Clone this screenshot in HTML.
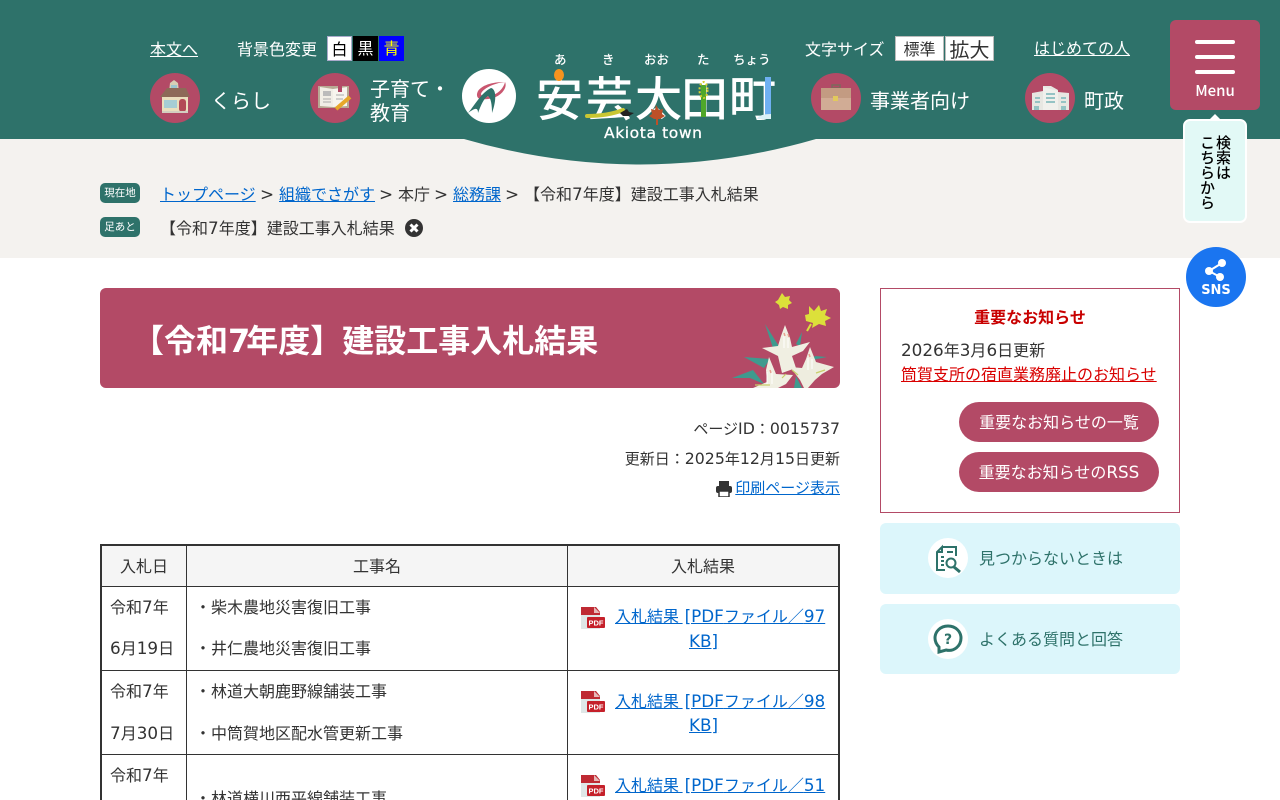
<!DOCTYPE html>
<html lang="ja"><head><meta charset="utf-8"><title>【令和7年度】建設工事入札結果</title>
<style>
*{box-sizing:border-box}
html,body{margin:0;padding:0;width:1280px;height:800px;overflow:hidden;background:#fff}
body{font:16px/24px "Noto Sans CJK JP",sans-serif;color:#333}
#p{position:absolute;left:0;top:0;width:1280px;height:800px;overflow:hidden}
.a{position:absolute;white-space:nowrap;line-height:24px;margin-top:-1px}
.b{position:absolute}
i{font-style:normal;font-family:"DejaVu Sans",sans-serif;font-size:1.05em}
a{color:#0066cc;text-decoration:underline}
.w{color:#fff}.w a{color:#fff}
.c{position:absolute;width:50px;height:50px;border-radius:50%;background:#b34a66;top:73px}
.n{font-size:20px;color:#fff}
.s15{font-size:15px}
.sw{position:absolute;top:36px;height:25px;text-align:center;line-height:23px}
.tag{position:absolute;left:100px;width:40px;height:20px;background:#2e726a;border-radius:5px;color:#fff;font-size:10.5px;line-height:20px;text-align:center}
.btn{position:absolute;left:959px;width:200px;height:40px;border-radius:20px;background:#b34a66;color:#fff;text-align:center;line-height:38px}
.help{position:absolute;left:880px;width:300px;background:#dcf6fb;border-radius:6px}
.hc{position:absolute;left:928px;width:40px;height:40px;border-radius:50%;background:#fff}
.k{font-size:47px;line-height:48px;font-weight:500;color:#fff}
.r{font-size:12.500px;font-weight:500;color:#fff}
</style></head><body><div id="p">

<div class="b" style="left:0;top:0;width:1280px;height:139px;background:#2e726a"></div>
<div class="b" style="left:0;top:139px;width:1280px;height:119px;background:#f4f2ef"></div>
<svg class="b" style="left:460px;top:138px" width="360" height="28"><path d="M4 1Q180 52 356 1Z" fill="#2e726a"/></svg>

<div class="a w" style="left:150px;top:37px"><a href="#">本文へ</a></div>
<div class="a w" style="left:237px;top:37px">背景色変更</div>
<div class="sw" style="left:327px;width:25px;background:#fff;border:1px solid #aac;color:#000">白</div>
<div class="sw" style="left:353px;width:25px;background:#000;color:#fff">黒</div>
<div class="sw" style="left:379px;width:25px;background:#00f;color:#ff0">青</div>

<div class="a w" style="left:805px;top:37px">文字サイズ</div>
<div class="sw" style="left:895px;width:49px;background:#fff;border:1px solid #bbb;color:#333">標準</div>
<div class="sw" style="left:945px;width:49px;background:#fff;border:1px solid #bbb;color:#333;font-size:20px">拡大</div>
<div class="a w" style="left:1034px;top:36px"><a href="#">はじめての人</a></div>

<div class="c" style="left:150px"><svg width="50" height="50"><path d="M20 10L24 7L28 10L29 19H19Z" fill="#d8cfb5"/><rect x="21" y="12" width="6" height="4" fill="#9cc6cf"/><path d="M10 24L17 15H36L40 24Z" fill="#8d6a58"/><rect x="12" y="24" width="26" height="16" fill="#eadfbd"/><rect x="14" y="27" width="13" height="8" fill="#a6cdd4"/><rect x="29" y="26" width="7" height="13" rx="3" fill="#b34a56"/><rect x="12" y="38" width="26" height="2" fill="#d3cfc0"/></svg></div>
<div class="a n" style="left:211px;top:89px">くらし</div>
<div class="c" style="left:310px"><svg width="50" height="50"><rect x="8" y="13" width="31" height="22" fill="#b8a994"/><path d="M10 14L23 16V34L10 33Z" fill="#f1eee6"/><path d="M23 16L37 14V33L23 34Z" fill="#f7f5ee"/><rect x="13" y="18" width="8" height="5" fill="#bbb"/><path d="M13 26h8M13 29h8M26 22h8M26 26h7" stroke="#aaa" stroke-width="1"/><rect x="28" y="13" width="4" height="6" fill="#b34a66"/><path d="M26 36L40 24" stroke="#e7a72a" stroke-width="4"/></svg></div>
<div class="a n" style="left:370px;top:77px">子育て・</div>
<div class="a n" style="left:370px;top:101px">教育</div>
<div class="c" style="left:811px"><svg width="50" height="50"><rect x="21" y="12" width="8" height="3" fill="none" stroke="#7d6a5c" stroke-width="1.500"/><rect x="10" y="15" width="30" height="10" fill="#c39b82"/><rect x="10" y="25" width="30" height="12" fill="#d1ac95"/><rect x="22" y="23" width="5" height="5" fill="#e2c95c"/></svg></div>
<div class="a n" style="left:870px;top:89px">事業者向け</div>
<div class="c" style="left:1025px"><svg width="50" height="50"><path d="M7 20L18 18V13L26 13L33 17V19L44 20V37H7Z" fill="#e7e7e2"/><path d="M18 14L33 18V37H18Z" fill="#f0f0ec"/><path d="M21 21h9M21 25h9M21 29h9M10 25h5M10 29h5M36 25h5M36 29h5" stroke="#94c3c4" stroke-width="2"/><rect x="9" y="33" width="5" height="4" fill="#94c3c4"/><rect x="36" y="33" width="5" height="4" fill="#94c3c4"/></svg></div>
<div class="a n" style="left:1084px;top:89px">町政</div>

<div class="b" style="left:462px;top:69px;width:54px;height:54px;border-radius:50%;background:#fff"></div>
<svg class="b" style="left:462px;top:69px" width="54" height="54" fill="none"><path d="M43 13C33 13 21 15 16 22C14 26 15 29 18 30C27 31 37 29 42 21C44 18 44 15 43 13C42 18 37 25 28 27C23 28 19 27 19 25C20 20 32 14 43 13Z" fill="#c9566f"/><path d="M6 44C13 36 19 24 29 19C34 20 35 30 30 44C30 36 29 29 26 27C22 29 19 36 16 44C16 39 14 38 6 44Z" fill="#2e726a"/></svg>

<div class="a r" style="left:554px;top:48px">あ</div>
<div class="a r" style="left:602px;top:48px">き</div>
<div class="a r" style="left:644px;top:48px">おお</div>
<div class="a r" style="left:697px;top:48px">た</div>
<div class="a r" style="left:733px;top:48px">ちょう</div>
<div class="a k" style="left:536px;top:73px">安</div>
<div class="a k" style="left:586px;top:73px">芸</div>
<div class="a k" style="left:635px;top:73px">太</div>
<div class="a k" style="left:681px;top:73px">田</div>
<div class="a k" style="left:729px;top:73px">町</div>
<svg class="b" style="left:530px;top:65px" width="250" height="65"><ellipse cx="29" cy="10" rx="5" ry="6" fill="#f7931e"/><path d="M57 51Q78 51 93 45" stroke="#c9c632" stroke-width="4" fill="none" stroke-linecap="round"/><path d="M90 48l7-4 2 3 5 1-5 3-6 0z" fill="#222"/><path d="M126 40l3 5 4-1-1 5 3 2-5 3-2 0 0 6h-2v-6h-2l-5-3 3-2-1-5 4 1z" fill="#bd5028"/><rect x="171" y="20" width="5" height="32" fill="#4fa82a"/><ellipse cx="173.500" cy="25" rx="4" ry="8" fill="none" stroke="#d8d030" stroke-width="2" stroke-dasharray="2 2"/><rect x="235" y="12" width="6" height="40" fill="#6fb0f2"/><path d="M227 54Q229 49 241 49V54Z" fill="#d9f1f7"/></svg>
<div class="a w" style="left:604px;top:122px;font-family:'DejaVu Sans',sans-serif;font-size:15.500px;letter-spacing:.6px;-webkit-text-stroke:.3px #fff">Akiota town</div>

<div class="b" style="left:1170px;top:20px;width:90px;height:90px;background:#b34a66;border-radius:6px"></div>
<div class="b" style="left:1195px;top:40px;width:40px;height:4px;border-radius:2px;background:#fff"></div>
<div class="b" style="left:1195px;top:55px;width:40px;height:4px;border-radius:2px;background:#fff"></div>
<div class="b" style="left:1195px;top:70px;width:40px;height:4px;border-radius:2px;background:#fff"></div>
<div class="a w" style="left:1170px;width:90px;top:80px;text-align:center;font-size:15px;font-weight:500">Menu</div>

<svg class="b" style="left:1183px;top:112px" width="64" height="112"><path d="M25 9L32 2L39 9Z" fill="#fff"/><rect x="1" y="8" width="62" height="102" rx="6" fill="#e2f9f6" stroke="#fff" stroke-width="2"/></svg>
<div class="b" style="left:1199px;top:135px;width:32px;color:#000;font-size:15px;line-height:16px;writing-mode:vertical-rl;height:80px;font-weight:500">検索は<br>こちらから</div>

<div class="b" style="left:1186px;top:247px;width:60px;height:60px;border-radius:50%;background:#1a75f0"></div>
<svg class="b" style="left:1186px;top:247px" width="60" height="60"><path d="M36 16L23 24L34 30" stroke="#fff" stroke-width="2" fill="none"/><circle cx="36" cy="16" r="4" fill="#fff"/><circle cx="23" cy="24" r="4" fill="#fff"/><circle cx="34" cy="30" r="4" fill="#fff"/></svg>
<div class="a w" style="left:1186px;width:60px;top:280px;text-align:center;font-family:'DejaVu Sans',sans-serif;font-size:13px;font-weight:700">SNS</div>

<div class="tag" style="top:183px">現在地</div>
<div class="tag" style="top:217px">足あと</div>
<div class="a" style="left:160px;top:182px"><a href="#">トップページ</a></div>
<div class="a" style="left:260px;top:182px"><i>&gt;</i></div>
<div class="a" style="left:279px;top:182px"><a href="#">組織でさがす</a></div>
<div class="a" style="left:379px;top:182px"><i>&gt;</i></div>
<div class="a" style="left:398px;top:182px">本庁</div>
<div class="a" style="left:434px;top:182px"><i>&gt;</i></div>
<div class="a" style="left:453px;top:182px"><a href="#">総務課</a></div>
<div class="a" style="left:505px;top:182px"><i>&gt;</i></div>
<div class="a" style="left:524px;top:182px">【令和<i>7</i>年度】建設工事入札結果</div>
<div class="a" style="left:160px;top:216px">【令和<i>7</i>年度】建設工事入札結果</div>
<svg class="b" style="left:405px;top:219px" width="18" height="18"><circle cx="9" cy="9" r="9" fill="#333"/><path d="M5.500 5.500L12.500 12.500M12.500 5.500L5.500 12.500" stroke="#fff" stroke-width="3"/></svg>

<div class="b" style="left:100px;top:288px;width:740px;height:100px;background:#b34a66;border-radius:6px;overflow:hidden">
<svg class="b" style="left:620px;top:0" width="120" height="100">
<path d="M45 36L60 60L53 60Z" fill="#3f9a8e"/><path d="M82 44L80 58L76 56Z" fill="#3f9a8e"/><path d="M24 69L50 71L44 80Z" fill="#3f9a8e"/><path d="M12 90L33 82L44 96L30 90Z" fill="#3f9a8e"/><path d="M107 69L92 72L95 68Z" fill="#3f9a8e"/><path d="M76 88L82 100H74Z" fill="#3f9a8e"/>
<path d="M62 5L65 9L70 8L69 12L72 15L68 17L68 21L63 19L60 21L59 17L55 14L58 12Z" fill="#dce03a"/>
<path d="M89 18L94 23L99 17L101 23L107 21L105 27L111 30L105 33L106 38L99 36L92 40L93 35L86 33L85 27L89 26Z" fill="#dce03a"/><path d="M91 36L87 43" stroke="#dce03a" stroke-width="2"/>
<path d="M65 37L70 50L72 59L90 54L83 63L72 68L76 80L62 85L58 68L42 60L58 58L61 48Z" fill="#f0efe2"/>
<path d="M90 59L96 74L114 79L102 86L95 92L88 100H84L80 92L70 79L82 80L86 71Z" fill="#eeeddf"/>
<path d="M49 69L56 86L73 87L66 96L58 100H33L47 94L46 82Z" fill="#f0efe2"/>
<path d="M64 48v12M68 50v10M88 70v12M92 71v10M47 84v12M52 84v12" stroke="#fff"/><path d="M72 82L78 87M96 85L105 82M35 97H50M62 90L66 86" stroke="#c8cf6a" stroke-width="1.200"/><path d="M64 45l1 3M68 46l1 3M50 82l1 3M89 66l1 3" stroke="#e8a090" stroke-width="1.500"/></svg>
</div>
<div class="a" style="left:132px;top:322px;font-size:32px;line-height:36px;font-weight:700;color:#fff">【令和<span style="font-family:'DejaVu Sans',sans-serif;font-size:32px;letter-spacing:-4px">7</span>年度】建設工事入札結果</div>

<div class="a s15" style="right:440px;top:418px">ページ<i>ID</i>：<i>0015737</i></div>
<div class="a s15" style="right:440px;top:448px">更新日：<i>2025</i>年<i>12</i>月<i>15</i>日更新</div>
<svg class="b" style="left:716px;top:481px" width="16" height="16"><rect x="3" y="0" width="10" height="5" fill="#333"/><rect x="0" y="5" width="16" height="7" rx="2" fill="#333"/><rect x="3" y="10" width="10" height="6" fill="#fff" stroke="#333" stroke-width="1.500"/></svg>
<div class="a s15" style="right:440px;top:477px"><a href="#">印刷ページ表示</a></div>

<div class="b" style="left:100px;top:544px;width:740px;height:256px;border:2px solid #333;border-bottom:0"></div>
<div class="b" style="left:102px;top:546px;width:736px;height:40px;background:#f5f5f5"></div>
<div class="b" style="left:186px;top:546px;width:1px;height:254px;background:#333"></div>
<div class="b" style="left:567px;top:546px;width:1px;height:254px;background:#333"></div>
<div class="b" style="left:102px;top:586px;width:736px;height:1px;background:#333"></div>
<div class="b" style="left:102px;top:670px;width:736px;height:1px;background:#333"></div>
<div class="b" style="left:102px;top:754px;width:736px;height:1px;background:#333"></div>

<div class="a" style="left:120px;top:554px">入札日</div>
<div class="a" style="left:353px;top:554px">工事名</div>
<div class="a" style="left:671px;top:554px">入札結果</div>

<div class="a" style="left:110px;top:595px">令和<i>7</i>年</div>
<div class="a" style="left:110px;top:636px"><i>6</i>月<i>19</i>日</div>
<div class="a" style="left:110px;top:679px">令和<i>7</i>年</div>
<div class="a" style="left:110px;top:721px"><i>7</i>月<i>30</i>日</div>
<div class="a" style="left:110px;top:763px">令和<i>7</i>年</div>

<div class="a" style="left:195px;top:595px">・柴木農地災害復旧工事</div>
<div class="a" style="left:195px;top:636px">・井仁農地災害復旧工事</div>
<div class="a" style="left:195px;top:679px">・林道大朝鹿野線舗装工事</div>
<div class="a" style="left:195px;top:721px">・中筒賀地区配水管更新工事</div>
<div class="a" style="left:195px;top:786px">・林道横川西平線舗装工事</div>

<svg width="0" height="0" style="position:absolute"><defs><g id="pdf"><path d="M0 0H15L19 5V22H0Z" fill="#dfe7e7"/><path d="M0 0H15L19 5V8H0Z" fill="#bf2a33"/><path d="M13 0L19 6H13Z" fill="#e6b8b8"/><rect x="6" y="10" width="18" height="11" rx="1" fill="#c5202a"/><text x="15" y="18.500" font-size="7.500" font-family="Liberation Sans" font-weight="700" fill="#fff" text-anchor="middle">PDF</text></g></defs></svg>
<svg class="b" style="left:581px;top:607px" width="25" height="22"><use href="#pdf"/></svg>
<svg class="b" style="left:581px;top:691px" width="25" height="22"><use href="#pdf"/></svg>
<svg class="b" style="left:581px;top:775px" width="25" height="22"><use href="#pdf"/></svg>
<div class="a" style="left:615px;top:604px"><a href="#">入札結果 <i style="margin-left:2px">[PDF</i>ファイル／<i>97</i></a></div>
<div class="a" style="left:689px;top:629px"><a href="#"><i>KB]</i></a></div>
<div class="a" style="left:615px;top:689px"><a href="#">入札結果 <i style="margin-left:2px">[PDF</i>ファイル／<i>98</i></a></div>
<div class="a" style="left:689px;top:713px"><a href="#"><i>KB]</i></a></div>
<div class="a" style="left:615px;top:773px"><a href="#">入札結果 <i style="margin-left:2px">[PDF</i>ファイル／<i>51</i></a></div>

<div class="b" style="left:880px;top:288px;width:300px;height:225px;border:1px solid #b34a66"></div>
<div class="a" style="left:880px;width:300px;top:305px;text-align:center;font-weight:700;color:#c80000">重要なお知らせ</div>
<div class="a" style="left:901px;top:338px"><i>2026</i>年<i>3</i>月<i>6</i>日更新</div>
<div class="a" style="left:901px;top:362px"><a href="#" style="color:#d90000">筒賀支所の宿直業務廃止のお知らせ</a></div>
<div class="btn" style="top:402px">重要なお知らせの一覧</div>
<div class="btn" style="top:452px">重要なお知らせの<i>RSS</i></div>

<div class="help" style="top:523px;height:71px"></div>
<div class="help" style="top:604px;height:70px"></div>
<div class="hc" style="top:538px"></div>
<div class="hc" style="top:619px"></div>
<svg class="b" style="left:928px;top:538px" width="40" height="40" fill="none" stroke="#2e726a" stroke-width="2"><path d="M14 9H28V18M17 32H9V14L14 9V14H9"/><path d="M13 19h3M13 23h3M13 27h3M19 14h6"/><circle cx="23" cy="25" r="4.500"/><path d="M26 29L32 34" stroke-width="3"/></svg>
<svg class="b" style="left:928px;top:619px" width="40" height="40" fill="none" stroke="#2e726a" stroke-width="3"><path d="M20 7C12 7 7 13 7 19C7 23 9 26 11 28L11 33L18 31C26 33 33 27 33 19C33 13 28 7 20 7Z"/><text x="20" y="25" font-size="14" font-family="DejaVu Sans" font-weight="700" fill="#2e726a" stroke="none" text-anchor="middle">?</text></svg>
<div class="a" style="left:979px;top:546px;color:#2e726a">見つからないときは</div>
<div class="a" style="left:979px;top:627px;color:#2e726a">よくある質問と回答</div>

</div></body></html>
